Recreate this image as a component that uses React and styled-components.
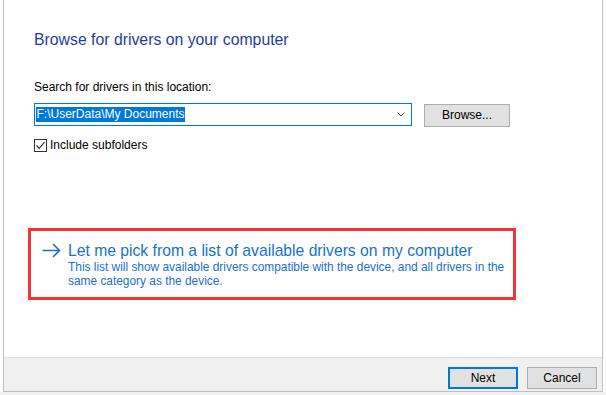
import React from "react";
import styled, { createGlobalStyle } from "styled-components";

const GlobalStyle = createGlobalStyle`
  html, body { margin: 0; padding: 0; background: #ffffff; }
  body { font-family: "Liberation Sans", Arial, sans-serif; color: #000; }
  * { box-sizing: border-box; }
`;

const Page = styled.div`
  width: 606px;
  height: 395px;
  display: flex;
  flex-direction: column;
  background: #ffffff;
  overflow: hidden;
`;

const Dialog = styled.div`
  margin-left: 3px;
  width: 600px;
  height: 392px;
  border: 1px solid #bfbfbf;
  border-top: none;
  display: flex;
  flex-direction: column;
  background: #ffffff;
`;

const BottomStrip = styled.div`
  flex: 1;
  background: #f0f0f0;
`;

const Body = styled.div`
  flex: 1;
  padding: 30px 0 0 30px;
  display: flex;
  flex-direction: column;
`;

const Title = styled.h1`
  margin: 0;
  font-size: 15.8px;
  line-height: 20px;
  font-weight: normal;
  color: #1f3d9e;
`;

const Label = styled.div`
  margin-top: 30px;
  font-size: 12px;
  line-height: 15px;
`;

const PathRow = styled.div`
  margin-top: 8px;
  display: flex;
  align-items: flex-start;
  gap: 12px;
`;

const Combo = styled.div`
  width: 378px;
  height: 23px;
  border: 1px solid #0078d7;
  display: flex;
  align-items: center;
  padding-left: 1px;
  background: #fff;
`;

const Selected = styled.span`
  background: #0078d7;
  color: #ffffff;
  font-size: 12px;
  line-height: 15px;
  height: 15px;
  padding: 0 0.5px;
  white-space: nowrap;
`;

const Chevron = styled.svg`
  margin-left: auto;
  margin-right: 6px;
  display: block;
`;

const Button = styled.button`
  width: ${(p) => p.$w || 70}px;
  height: ${(p) => p.$h || 22}px;
  margin-top: ${(p) => p.$mt || 0}px;
  background: #e1e1e1;
  border: ${(p) => (p.$default ? "2px solid #0078d7" : "1px solid #adadad")};
  font-family: "Liberation Sans", Arial, sans-serif;
  font-size: 12px;
  color: #000;
  padding: 0;
  line-height: 15px;
  cursor: default;
`;

const CheckRow = styled.label`
  margin-top: 11px;
  height: 15px;
  display: flex;
  align-items: center;
  gap: 3px;
  font-size: 12px;
  line-height: 15px;
`;

const CheckBox = styled.span`
  width: 13px;
  height: 13px;
  border: 1px solid #333333;
  background: #fff;
  display: flex;
  align-items: center;
  justify-content: center;
`;

const CommandLink = styled.div`
  margin: 75px 0 0 -6px;
  width: 488px;
  height: 72px;
  border: 3px solid #ef3338;
  padding: 9.5px 0 0 11px;
  display: grid;
  grid-template-columns: 26px 1fr;
  align-items: start;
`;

const Arrow = styled.svg`
  display: block;
  margin-top: 2px;
`;

const LinkTitle = styled.div`
  font-size: 15.7px;
  line-height: 19px;
  color: #1a6fcf;
  white-space: nowrap;
`;

const LinkDesc = styled.div`
  font-size: 11.9px;
  line-height: 14px;
  color: #1a6fcf;
  width: 445px;
`;

const Footer = styled.div`
  height: 34px;
  border-top: 1px solid #dfdfdf;
  background: #f0f0f0;
  display: flex;
  justify-content: flex-end;
  align-items: flex-start;
  gap: 9px;
  padding: 9px 5px 0 0;
`;

export default function App() {
  return (
    <>
      <GlobalStyle />
      <Page>
        <Dialog>
          <Body>
            <Title>Browse for drivers on your computer</Title>
            <Label>Search for drivers in this location:</Label>
            <PathRow>
              <Combo>
                <Selected>F:\UserData\My Documents</Selected>
                <Chevron width="8" height="5" viewBox="0 0 8 5">
                  <path d="M0.5 0.5 L4 4 L7.5 0.5" fill="none" stroke="#555" strokeWidth="1" />
                </Chevron>
              </Combo>
              <Button $w={86} $h={23} $mt={1}>Browse...</Button>
            </PathRow>
            <CheckRow>
              <CheckBox>
                <svg width="11" height="11" viewBox="0 0 11 11">
                  <path d="M1.5 5.5 L4.2 8.3 L9.5 2.2" fill="none" stroke="#333" strokeWidth="1.2" />
                </svg>
              </CheckBox>
              Include subfolders
            </CheckRow>
            <CommandLink>
              <Arrow width="19" height="15" viewBox="0 0 19 15">
                <path d="M0.5 7.5 H17.5 M11 1 L17.5 7.5 L11 14" fill="none" stroke="#1a6fcf" strokeWidth="1.6" />
              </Arrow>
              <div>
                <LinkTitle>Let me pick from a list of available drivers on my computer</LinkTitle>
                <LinkDesc>
                  This list will show available drivers compatible with the device, and all drivers in the same category as the device.
                </LinkDesc>
              </div>
            </CommandLink>
          </Body>
          <Footer>
            <Button $default>Next</Button>
            <Button>Cancel</Button>
          </Footer>
        </Dialog>
        <BottomStrip />
      </Page>
    </>
  );
}
